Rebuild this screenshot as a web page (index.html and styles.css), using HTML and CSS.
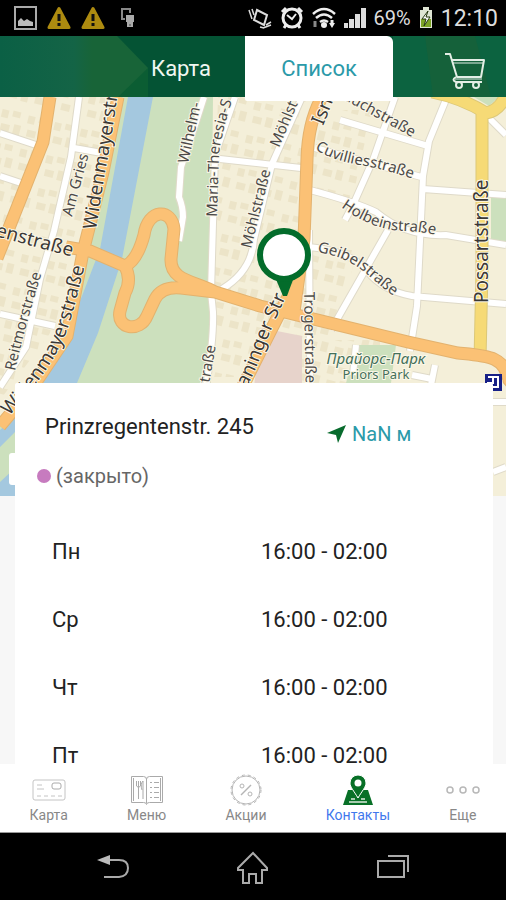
FILE: index.html
```html
<!DOCTYPE html>
<html lang="ru">
<head>
<meta charset="utf-8">
<meta name="viewport" content="width=device-width, initial-scale=1">
<title>Контакты</title>
<link rel="stylesheet" href="styles.css">
</head>
<body>
<div class="status">
  <div class="status-left">
    <svg width="23" height="24" viewBox="0 0 23 24"><path d="M1 1h21v22H1z" fill="none" stroke="#aaa" stroke-width="2"/><path d="M4 20v-5l3-3 3 3 3-2 3 2 3 1v4z" fill="#bbb"/></svg>
    <svg width="24" height="24" viewBox="0 0 24 24"><path d="M12 2.500 22 21.500H2z" fill="#ad8b10" stroke="#ad8b10" stroke-width="3" stroke-linejoin="round"/><path d="M12 8v7M12 17v3" stroke="#111" stroke-width="3"/></svg>
    <svg width="24" height="24" viewBox="0 0 24 24"><path d="M12 2.500 22 21.500H2z" fill="#ad8b10" stroke="#ad8b10" stroke-width="3" stroke-linejoin="round"/><path d="M12 8v7M12 17v3" stroke="#111" stroke-width="3"/></svg>
    <svg class="device" width="14" height="20" viewBox="0 0 14 20"><path d="M4 11H1V1h8v4" fill="none" stroke="#888" stroke-width="2"/><path d="M5 7h8v7h-1v5H6v-5H5z" fill="#aaa"/><path d="M8 17h2" stroke="#444"/></svg>
  </div>
  <div class="status-right">
    <svg width="24" height="24" viewBox="0 0 24 24" fill="none" stroke="#ddd" stroke-width="2"><path d="M9 4l10 5-3 10-10-5z"/><path d="M1 4l3 9M4 3l2 6M15 22l8-3M18 19l5-3M12 21l4 1" stroke-width="1.500"/></svg>
    <svg width="24" height="24" viewBox="0 0 24 24" fill="none" stroke="#eee" stroke-width="3"><circle cx="12" cy="12" r="9"/><path d="M2 6l4-4M22 6l-4-4M4 22l2-3M20 22l-2-3"/><path d="M7 9l5 4 4-5" stroke-width="2"/></svg>
    <svg width="24" height="24" viewBox="0 0 24 24" fill="none" stroke="#eee"><path d="M1 8q11-10 22 0M4 12q8-7 16 0M8 16q4-3 8 0" stroke-width="2.500"/><circle cx="12" cy="19" r="3" fill="#eee" stroke="none"/><path d="M3 15v6" stroke="#888" stroke-width="3"/><path d="M20 14v4" stroke-width="3"/><path d="M17 17h6l-3 5z" fill="#eee" stroke="none"/></svg>
    <svg width="22" height="22" viewBox="0 0 22 22" fill="#ddd"><path d="M0 16h4v5H0zM5 12h5v9H5zM11 7h5v14h-5zM17 1h5v20h-5z"/></svg>
    <span class="percent">69%</span>
    <svg width="14" height="22" viewBox="0 0 14 22"><path d="M4 0h6v3h3v18H1V3h3z" fill="#dfe5d4"/><path d="M2 12h10v8H2z" fill="#7ca325"/><path d="M9 4 3 12h4l-2 7 6-9H7z" fill="#fff" stroke="#263810"/></svg>
    <span class="clock">12:10</span>
  </div>
</div>

<header class="header">
  <svg class="header-art" viewBox="0 0 506 61" preserveAspectRatio="none">
    <defs><linearGradient id="shade"><stop offset="0" stop-color="#0b6045"/><stop offset=".5" stop-color="#146446"/><stop offset=".62" stop-color="#186438"/><stop offset="1" stop-color="#186438"/></linearGradient></defs>
    <path d="M0 0h117l31 32v29H0z" fill="url(#shade)"/><path d="M148 32v29h-30z" fill="#0b5d33"/><path d="M393 0h113v61H393z" fill="#0c6340"/><path d="M425 0h50l16 61h-58z" fill="#15613a"/>
  </svg>
  <button class="view-tab view-map" type="button">Карта</button>
  <button class="view-tab view-list" type="button">Список</button>
  <button class="cart" type="button" aria-label="Корзина">
    <svg width="42" height="38" viewBox="0 0 42 38" fill="none" stroke="#e4eee5" stroke-width="2" stroke-linejoin="round"><path d="M1 2h5l7 23h24l3-17H8"/><path d="M9 11h30" stroke-width="1"/><path d="M12 25q-5 3 0 5h26" stroke-width="2"/><path d="M11 27h27" stroke-width="1"/><circle cx="15" cy="33" r="3"/><circle cx="32" cy="33" r="3"/></svg>
  </button>
</header>

<main class="main">
  <svg class="map" viewBox="0 97 506 399" preserveAspectRatio="xMidYMin slice">
    <defs>
      <pattern id="blocks" width="27" height="34" patternUnits="userSpaceOnUse" patternTransform="rotate(14)"><path d="M2 3h7v8H2zM13 2h8v6h-8zM4 17h9v7H4zM17 15h7v10h-7z" fill="#ece4c8"/></pattern>
      <path id="p-maria" d="M217 217L219 154Q222 130 237 85"/>
      <path id="p-widen" d="M96 230L105 172Q110 150 119 85"/>
      <path id="p-widen2" d="M9 416Q48 374 65 336Q76 306 88 250"/>
      <path id="p-reit" d="M15 371Q24 330 45 262"/>
      <path id="p-cuv" d="M315 149Q330 160 360 165T430 185"/>
      <path id="p-hol" d="M341 207Q372 230 404 231T460 243"/>
      <path id="p-gei" d="M317 252Q348 257 368 275T420 315"/>
      <path id="p-ism" d="M236 402Q250 386 260 358T296 275"/>
      <path id="white-roads" d="M79 97l-8 60-17 74-14 48-14 68-26 40M0 133l36 12M0 176l21 7M74 148l28 5M0 314l55 12M204 97l-8 25-15 45-2 30q4 10 4 20l-4 24M235 97l-20 58-4 137 2 20q1 25-7 75M211 158l90 10M222 289q30-18 32-50l18-75 30-67M395 97l-22 63-20 45-8 15M447 97l-18 44-6 35-6 130-7 45M310 190q45 12 66 22 30 25 70 23l60 10M340 120l88 26M315 148l110 30M423 189l83 6M309 247q42 4 58 24t45 25l94 8M388 230l-57 100M309 230l1 150M489 118l17 17M356 345l-3 30M435 365l-5 25M412 375l20 4M493 402h13M493 472l13-5M500 380l6-10"/>
      <path id="yellow-roads" d="M432 92q30 6 54 21 13-2 20-18M482 110v160l-2 90"/>
      <path id="orange-roads" d="M50 97l-7 45L3 243l-6 15M118 97l-15 75-20 80-16 84-35 52-32 38M66 247l24 4 35 15q12-5 19-31c4-27 28-27 30-6l-3 30c-1 22 24 22 44 33l45 14 148 36 50 11c30 3 46 3 51 27l10 12M90 251l35 15q7 14 0 27l-5 18c-4 18 20 22 27 5l8-17q7-13 26-11l34 4M322 97q-14 25-15 62l-3 80-10 73M294 285l-24 47-32 64"/>
    </defs>
    <path d="M0 97h506v399H0z" fill="#f4efd9"/>
    <path d="M0 97h110L75 300 0 400zM218 97h90v280h-98zM312 110h60l-20 90h-40zM308 250h50l-25 85h-30zM300 340h80v50h-80z" fill="url(#blocks)"/>
    <path d="M121 97h92l-2 194v130H0v75h15V400l28-17 27-83z" fill="#cce0bd"/>
    <path d="M491 196h15v48h-15zM474 97h25l-10 9zM356 345h40l-5 38h-45z" fill="#cce0bd"/>
    <path d="M262 328l40 8v50h-48z" fill="#e7d3cb"/>
    <path d="M128 97h25L122 259 98 333 77 383H43l22-50 17-37 18-47zM15 417v15L0 447v-17zM0 482l15-14v28H0z" fill="#a4c8df"/>
    <use href="#white-roads" class="road white-edge"/>
    <use href="#white-roads" class="road white-road"/>
    <use href="#yellow-roads" class="road yellow-edge"/>
    <use href="#yellow-roads" class="road yellow-road"/>
    <use href="#orange-roads" class="road orange-edge"/>
    <use href="#orange-roads" class="road orange-road"/>
    <g class="label">
      <text transform="translate(188 164) rotate(-78)">Wilhelm-</text>
      <text><textPath href="#p-maria">Maria-Theresia-S</textPath></text>
      <text transform="translate(72 217) rotate(-75)">Am Gries</text>
      <text><textPath href="#p-reit">Reitmorstraße</textPath></text>
      <text transform="translate(251 249) rotate(-76)">Möhlstraße</text>
      <text transform="translate(279 148) rotate(-67)">Möhlst</text>
      <text transform="translate(343 99) rotate(29)">auchstraße</text>
      <text><textPath href="#p-cuv">Cuvilliesstraße</textPath></text>
      <text><textPath href="#p-hol">Holbeinstraße</textPath></text>
      <text><textPath href="#p-gei">Geibelstraße</textPath></text>
      <text transform="translate(304 292) rotate(89)">Trogerstraße</text>
      <text transform="translate(208 390) rotate(-80)">straße</text>
    </g>
    <g class="label label-main">
      <text><textPath href="#p-widen">Widenmayerstr</textPath></text>
      <text><textPath href="#p-widen2">Widenmayerstraße</textPath></text>
      <text transform="translate(-5 236) rotate(15)">enstraße</text>
      <text transform="translate(323 126) rotate(-68)">Isn</text>
      <text transform="translate(488 303) rotate(-90)">Possartstraße</text>
      <text><textPath href="#p-ism">maninger Str</textPath></text>
    </g>
    <g class="label label-park"><text class="park-name" x="376" y="364">Прайорс-Парк</text><text x="376" y="379">Priors Park</text></g>
    <path d="M485 374h17v17h-17z" fill="#172087"/><path d="M488 377h10v10h-10M493 377v6h-6" fill="none" stroke="#fff" stroke-width="2"/>
    <rect x="9" y="453" width="20" height="32" rx="3" fill="#fff"/>
    <path d="M275 277h19l-7 19h-4z" fill="#036c2b"/><circle cx="284" cy="255" r="24" fill="#fff" stroke="#036c2b" stroke-width="6"/>
  </svg>

  <section class="card">
    <div class="place">
      <h1 class="address">Prinzregentenstr. 245</h1>
      <a class="distance" href="#route"><svg width="20" height="20" viewBox="0 0 20 20"><path d="M19 1 0 9l9 2 2 8z" fill="#086b2d"/></svg>NaN м</a>
    </div>
    <p class="state"><span class="dot"></span>(закрыто)</p>
    <table class="hours">
      <tr><th scope="row">Пн</th><td>16:00 - 02:00</td></tr>
      <tr><th scope="row">Ср</th><td>16:00 - 02:00</td></tr>
      <tr><th scope="row">Чт</th><td>16:00 - 02:00</td></tr>
      <tr><th scope="row">Пт</th><td>16:00 - 02:00</td></tr>
    </table>
  </section>
</main>

<nav class="tabs">
  <a class="tab" href="#card"><svg width="34" height="32" viewBox="0 0 34 32" fill="none" stroke="#c4c4c4"><rect x="1" y="6" width="32" height="20" rx="2"/><rect x="20" y="9" width="9" height="6" rx="2" stroke="#aaa"/><path d="M5 11h5M5 15h7M5 22h4M12 22h4M19 22h4M26 22h4"/></svg>Карта</a>
  <a class="tab" href="#menu"><svg width="34" height="32" viewBox="0 0 34 32" fill="none" stroke="#aaa"><path d="M1.500 2.500h12q3 0 3 3 0-3 3-3h13v26h-13q-3 0-3 2 0-2-3-2h-12zM16.500 5v24M3.500 4v23M30.500 4v23"/><path d="M6.500 7v5q2 3 4 0V7M8.500 7v18M13 25V7q-3 3-1 9"/><path d="M20 8.500h2m2 0h5M20 13.500h2m2 0h5M20 18.500h2m2 0h5M20 23.500h2m2 0h5"/></svg>Меню</a>
  <a class="tab" href="#promo"><svg width="34" height="32" viewBox="0 0 34 32" fill="none" stroke="#b5b5b5"><circle cx="17" cy="16" r="14"/><circle cx="17" cy="16" r="15" stroke-dasharray="3 3"/><path d="M12 21 22 11" stroke-width="1.500"/><circle cx="13" cy="12" r="2"/><circle cx="21" cy="20" r="2"/></svg>Акции</a>
  <a class="tab tab-active" href="#contacts" aria-current="page"><svg width="34" height="32" viewBox="0 0 34 32"><path d="M7 16h5l5 8 5-8h5l5 15H2z" fill="#087027"/><path d="M8 28h18M10 25h4M20 25h4" stroke="#dbe9dd" stroke-width="1.500"/><path d="M17 24C13 17 9 13 9 9a8 8 0 0 1 16 0c0 4-4 8-8 15z" fill="#087027" stroke="#fff"/><circle cx="17" cy="9" r="3.500" fill="#fff"/></svg>Контакты</a>
  <a class="tab" href="#more"><svg width="34" height="32" viewBox="0 0 34 32" fill="none" stroke="#b8b8b8" stroke-width="1.500"><circle cx="4" cy="16" r="3"/><circle cx="17" cy="16" r="3"/><circle cx="30" cy="16" r="3"/></svg>Еще</a>
</nav>

<div class="system">
  <button type="button" aria-label="Назад"><svg width="34" height="34" viewBox="0 0 34 34"><path d="M13 10h10q9 0 9 8t-9 9H8" fill="none" stroke="#aaa" stroke-width="2"/><path d="M1 10l13-5v10z" fill="#bbb"/></svg></button>
  <button type="button" aria-label="Домой"><svg width="34" height="34" viewBox="0 0 34 34"><path d="M17 3 2 18v2h5v13h6v-9h7v9h6V20h5v-2z" fill="none" stroke="#aaa" stroke-width="2"/></svg></button>
  <button type="button" aria-label="Недавние"><svg width="34" height="34" viewBox="0 0 34 34"><path d="M2 11h26v16H2zM12 6h20v16" fill="none" stroke="#aaa" stroke-width="2"/></svg></button>
</div>
</body>
</html>
```
FILE: styles.css
```css
* { box-sizing: border-box; }
body {
  margin: 0;
  height: 100vh;
  display: flex;
  flex-direction: column;
  background: #f7f7f7;
  font-family: Roboto, "Noto Sans", sans-serif;
  color: #222;
}
button { border: 0; padding: 0; background: none; font: inherit; }
a { color: inherit; text-decoration: none; }
svg { display: block; flex: none; }

.status {
  flex: none;
  height: 36px;
  padding: 0 8px 0 14px;
  display: flex;
  justify-content: space-between;
  align-items: center;
  background: #000;
  color: #ddd;
}
.status-left, .status-right { display: flex; align-items: center; }
.status-left { gap: 10px; }
.device { margin-left: 6px; }
.status-right { gap: 8px; }
.percent { font-size: 20px; }
.clock { font-size: 23px; }

.header {
  flex: none;
  position: relative;
  z-index: 2;
  height: 61px;
  padding-left: 4px;
  display: grid;
  grid-template-columns: 1fr 128px 148px 1fr;
  background: #045334;
}
.header-art { position: absolute; inset: 0; width: 100%; height: 100%; }
.view-tab { position: relative; font-size: 22px; }
.view-map { grid-column: 2; color: #f1f7f1; }
.view-list { height: 65px; background: #fff; color: #2b9aa9; border-radius: 0 6px 2px 2px; }
.cart { position: relative; justify-self: end; padding: 4px 20px 0 0; }

.main { flex: 1; min-height: 0; overflow: hidden; display: grid; align-content: start; }
.map { grid-area: 1 / 1; width: 100%; height: 399px; }
.label { font-family: "Noto Sans", sans-serif; font-size: 15px; fill: #4c4a48; stroke: #fbf7e8; stroke-width: 2px; paint-order: stroke; }
.label-main { font-size: 19px; fill: #3a3836; }
.label-park { font-size: 13px; fill: #44705a; text-anchor: middle; }
.park-name { font-size: 15px; font-style: italic; }
.road { fill: none; }
.white-edge { stroke: #dfdac9; stroke-width: 8px; }
.white-road { stroke: #fff; stroke-width: 6px; }
.yellow-edge { stroke: #dcc878; stroke-width: 13px; }
.yellow-road { stroke: #f6da76; stroke-width: 11px; }
.orange-edge { stroke: #e3b26e; stroke-width: 13px; }
.orange-road { stroke: #fbc175; stroke-width: 11px; }

.card {
  grid-area: 1 / 1;
  position: relative;
  margin: 286px 13px 0 15px;
  padding: 22px 30px 0;
  background: #fff;
  border-radius: 2px;
}
.place { display: flex; align-items: center; }
.address { margin: 0; font-size: 22px; line-height: 30px; font-weight: 400; flex: 0 0 282px; }
.distance { display: flex; align-items: center; gap: 5px; color: #2b9aa9; font-size: 20px; line-height: 30px; padding-top: 14px; }
.state { margin: 14px 0 0 -8px; display: flex; align-items: center; gap: 5px; font-size: 20px; line-height: 26px; color: #666; }
.dot { width: 14px; height: 14px; border-radius: 50%; background: #c77bbf; }
.hours { width: 100%; margin-top: 28px; border-collapse: collapse; font-size: 22px; }
.hours tr { height: 68px; }
.hours th { width: 216px; padding: 0 0 0 7px; font-weight: 400; text-align: left; }
.hours td { padding: 0; }

.tabs {
  flex: none;
  height: 69px;
  display: flex;
  justify-content: space-around;
  padding-top: 10px;
  background: #fff;
  border-bottom: 1px solid #999;
}
.tab { display: flex; flex-direction: column; align-items: center; font-size: 14px; line-height: 18px; color: #888; }
.tab svg { margin: 0 -4px; }
.tab-active { color: #3f78ed; }

.system {
  flex: none;
  height: 67px;
  padding: 0 43px;
  display: flex;
  justify-content: space-around;
  align-items: center;
  background: #000;
}
```
